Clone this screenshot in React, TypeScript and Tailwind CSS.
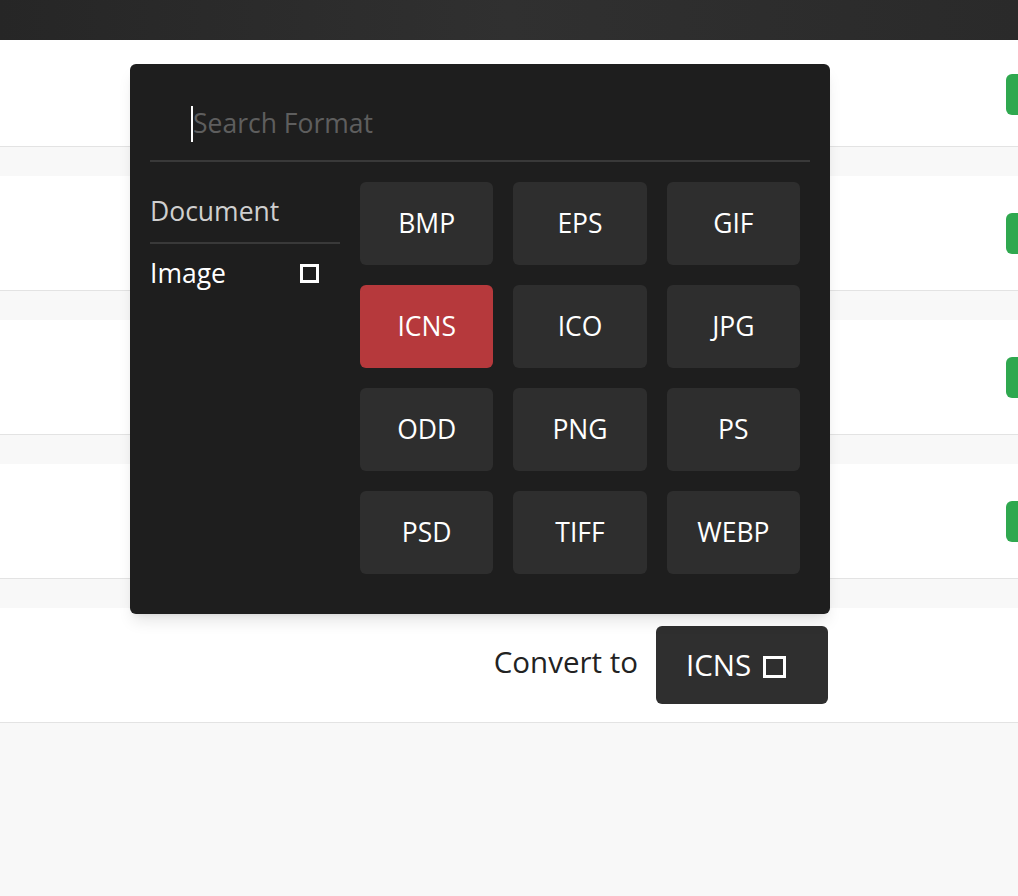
import React from 'react';

const formats = ['BMP', 'EPS', 'GIF', 'ICNS', 'ICO', 'JPG', 'ODD', 'PNG', 'PS', 'PSD', 'TIFF', 'WEBP'];

const Row = ({ first, children }: { first?: boolean; children?: React.ReactNode }) => (
  <div className={`bg-white border-b border-[#e3e3e3] flex items-center justify-end ${first ? 'h-[107px] pt-[2px]' : 'h-[115px]'}`}>
    {children}
  </div>
);

const GreenBtn = () => <div className="w-[12px] h-[41px] bg-[#2fa84f] rounded-l-[6px]" />;

const App: React.FC = () => {
  return (
    <div className="relative w-[1018px] h-[896px] overflow-hidden bg-[#f8f8f8] font-['Open_Sans',sans-serif]">
      {/* top bar */}
      <div className="h-10 bg-linear-to-r from-[#262626] via-[#303030] to-[#2a2a2a]" />

      {/* list rows */}
      <div className="flex flex-col gap-[29px]">
        <Row first>
          <GreenBtn />
        </Row>
        <Row>
          <GreenBtn />
        </Row>
        <Row>
          <GreenBtn />
        </Row>
        <Row>
          <GreenBtn />
        </Row>
        <div className="bg-white border-b border-[#e3e3e3] h-[115px] flex items-center justify-end pr-[190px] gap-[18px]">
          <span className="text-[29.5px] text-[#222] mb-[6px]">Convert to</span>
          <button className="h-[78px] w-[172px] bg-[#2f2f2f] rounded-[6px] flex items-center pl-[30px] gap-[12px] text-white text-[29.5px]">
            ICNS
            <span className="w-[23px] h-[22px] border-[3.5px] border-white mt-[3px]" />
          </button>
        </div>
      </div>

      {/* format picker */}
      <div className="absolute left-[130px] top-[64px] w-[700px] h-[550px] bg-[#1e1e1e] rounded-[6px] shadow-lg px-5 pt-5">
        <div className="h-[78px] flex items-center pl-[41px] pt-[3px] border-b-2 border-[#393939]">
          <div className="w-[2px] h-[36px] bg-white" />
          <span className="text-[26.5px] text-[#5e5e5e]">Search Format</span>
        </div>
        <div className="flex gap-5 mt-5">
          <div className="w-[190px] flex flex-col">
            <div className="h-[62px] flex items-center border-b-2 border-[#393939] text-[26.5px] text-[#cfcfcf]">
              Document
            </div>
            <div className="h-[60px] flex items-center justify-between pr-[21px] text-[26.5px] text-white">
              Image
              <span className="w-[19px] h-[19px] border-[3.5px] border-white -mt-[2px]" />
            </div>
          </div>
          <div className="w-[440px] grid grid-cols-3 gap-5">
            {formats.map((f) => (
              <div
                key={f}
                className={`h-[83px] rounded-[6px] flex items-center justify-center text-[26.5px] text-white ${
                  f === 'ICNS' ? 'bg-[#b6393c]' : 'bg-[#2e2e2e]'
                }`}
              >
                {f}
              </div>
            ))}
          </div>
        </div>
      </div>
    </div>
  );
};

export default App;
